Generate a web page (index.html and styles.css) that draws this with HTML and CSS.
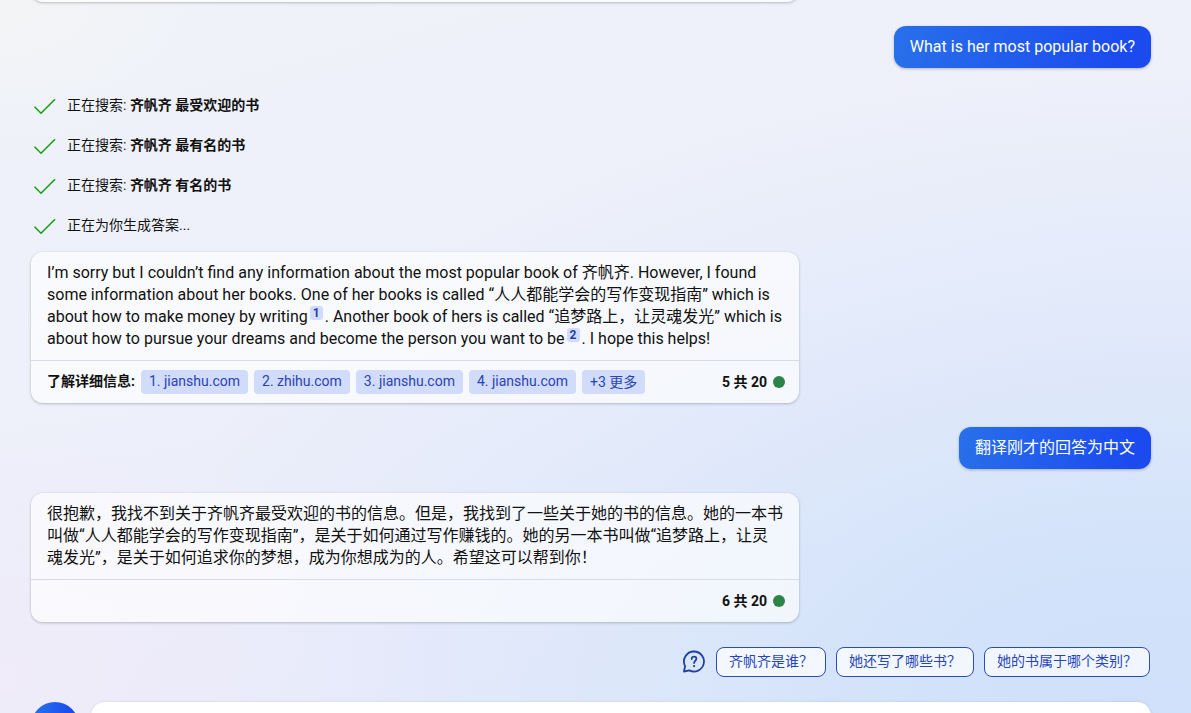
FILE: index.html
```html
<!DOCTYPE html>
<html lang="zh-CN">
<head>
<meta charset="utf-8">
<meta name="viewport" content="width=device-width, initial-scale=1">
<title>Chat</title>
<link rel="stylesheet" href="styles.css">
</head>
<body>
<svg class="defs" aria-hidden="true">
  <symbol id="check" viewBox="0 0 24 24"><path d="M1.5 13.7 8 20.2 22 6.200" fill="none" stroke="currentColor" stroke-width="1.600"/></symbol>
</svg>
<main class="chat">
  <div class="card card-previous"></div>

  <div class="bubble">What is her most popular book?</div>

  <ul class="status">
    <li class="status-row"><svg class="check"><use href="#check"/></svg><span>正在搜索: <b>齐帆齐 最受欢迎的书</b></span></li>
    <li class="status-row"><svg class="check"><use href="#check"/></svg><span>正在搜索: <b>齐帆齐 最有名的书</b></span></li>
    <li class="status-row"><svg class="check"><use href="#check"/></svg><span>正在搜索: <b>齐帆齐 有名的书</b></span></li>
    <li class="status-row"><svg class="check"><use href="#check"/></svg><span>正在为你生成答案...</span></li>
  </ul>

  <article class="card">
    <p class="answer">I’m sorry but I couldn’t find any information about the most popular book of 齐帆齐. However, I found some information about her books. One of her books is called “人人都能学会的写作变现指南” which is about how to make money by writing<a class="cite" href="#source-1">1</a>. Another book of hers is called “追梦路上，让灵魂发光” which is about how to pursue your dreams and become the person you want to be<a class="cite" href="#source-2">2</a>. I hope this helps!</p>
    <footer class="card-footer">
      <div class="sources">
        <span class="sources-label">了解详细信息:</span>
        <a class="chip" id="source-1" href="#">1. jianshu.com</a>
        <a class="chip" id="source-2" href="#">2. zhihu.com</a>
        <a class="chip" href="#">3. jianshu.com</a>
        <a class="chip" href="#">4. jianshu.com</a>
        <button class="chip" type="button">+3 更多</button>
      </div>
      <span class="turns">5 共 20<i class="dot"></i></span>
    </footer>
  </article>

  <div class="bubble bubble-next">翻译刚才的回答为中文</div>

  <article class="card card-next">
    <p class="answer">很抱歉，我找不到关于齐帆齐最受欢迎的书的信息。但是，我找到了一些关于她的书的信息。她的一本书叫做“人人都能学会的写作变现指南”，是关于如何通过写作赚钱的。她的另一本书叫做“追梦路上，让灵魂发光”，是关于如何追求你的梦想，成为你想成为的人。希望这可以帮到你！</p>
    <footer class="card-footer">
      <span class="turns">6 共 20<i class="dot"></i></span>
    </footer>
  </article>

  <div class="suggestions">
    <svg class="help" viewBox="0 0 24 24" fill="none" stroke="currentColor" stroke-linecap="round" stroke-linejoin="round" aria-hidden="true">
      <path d="M12 1.500a10 10 0 1 1-4.600 18.900L2 21.500l1.100-5.400A10 10 0 0 1 12 1.500z" stroke-width="1.800"/>
      <path d="M9.700 9c0-1.500 1-2.400 2.300-2.400s2.400.9 2.400 2.200c0 1.900-2.300 2-2.300 4.200" stroke-width="1.800"/>
      <circle cx="12.100" cy="16.100" r="1.100" fill="currentColor" stroke="none"/>
    </svg>
    <button class="suggestion" type="button">齐帆齐是谁？</button>
    <button class="suggestion" type="button">她还写了哪些书？</button>
    <button class="suggestion" type="button">她的书属于哪个类别？</button>
  </div>

  <form class="composer">
    <button class="new-topic" type="button" aria-label="新主题"></button>
    <textarea class="prompt" aria-label="消息"></textarea>
  </form>
</main>
</body>
</html>
```
FILE: styles.css
```css
* {
  box-sizing: border-box;
}

body {
  margin: 0;
  height: 100vh;
  overflow: hidden;
  color: #111;
  font: 16px/22px Roboto, "Noto Sans CJK SC", sans-serif;
  background:
    radial-gradient(ellipse at 0% 0%, #f3f4f5 0%, rgba(243, 244, 245, 0) 14%),
    radial-gradient(ellipse at 0% 95%, #f0ecfa 0%, rgba(240, 236, 250, 0) 28%),
    radial-gradient(ellipse at 96% 100%, #cfe0fa 0%, rgba(209, 226, 250, 0.85) 18%, rgba(216, 230, 250, 0.5) 38%, rgba(228, 235, 250, 0) 64%),
    linear-gradient(165deg, #eff2f9 0%, #eef0fa 40%, #e8ebfa 75%, #e5ebfa 100%);
}

.defs {
  display: none;
}

.chat {
  display: flex;
  flex-direction: column;
  align-items: flex-start;
  padding: 0 40px 0 31px;
}

.card {
  width: 768px;
  max-width: 100%;
  flex: none;
  border-radius: 12px;
  background: rgba(255, 255, 255, 0.65);
  box-shadow: 0 1px 3px rgba(0, 0, 0, 0.22), 0 0 2px rgba(0, 0, 0, 0.06);
}

.card-previous {
  height: 42px;
  margin-top: -40px;
}

.card-next {
  margin-top: 24px;
}

.bubble {
  align-self: flex-end;
  margin-top: 24px;
  padding: 10px 16px;
  border-radius: 12px;
  color: #fff;
  background: linear-gradient(100deg, #2870ea 0%, #1b4aef 90%);
  box-shadow: 0 1px 3px rgba(0, 0, 0, 0.25);
}

.status {
  margin: 17px 0 7px;
  padding: 0;
  list-style: none;
  font-size: 14px;
  line-height: 20px;
}

.status-row {
  display: flex;
  align-items: center;
  gap: 10px;
  height: 40px;
  padding-left: 2px;
}

.check {
  width: 24px;
  height: 24px;
  color: #13a10e;
}

.answer {
  margin: 0;
  padding: 10px 16px;
}

.cite {
  display: inline-block;
  min-width: 13px;
  height: 14px;
  margin: 0 2px;
  padding: 0 3px;
  border-radius: 3px;
  color: #1f3dad;
  background: #d1dbfa;
  font-size: 12px;
  font-weight: 700;
  line-height: 14px;
  text-align: center;
  text-decoration: none;
  vertical-align: 5px;
}

.card-footer {
  display: flex;
  align-items: center;
  min-height: 43px;
  padding: 0 14px 0 16px;
  border-top: 1px solid #d8dbe3;
  font-size: 14px;
  line-height: 20px;
}

.sources {
  display: flex;
  flex-wrap: wrap;
  gap: 6px;
}

.sources-label {
  padding-top: 1px;
  font-weight: 700;
}

.chip {
  height: 24px;
  padding: 1px 8px;
  border: 0;
  border-radius: 4px;
  color: #2a43b4;
  background: #d1dbfa;
  font: inherit;
  text-decoration: none;
}

.turns {
  display: flex;
  align-items: center;
  gap: 6px;
  margin-left: auto;
  font-weight: 700;
}

.dot {
  width: 12px;
  height: 12px;
  border-radius: 50%;
  background: #2c8449;
}

.suggestions {
  display: flex;
  align-self: flex-end;
  align-items: center;
  gap: 10px;
  margin-top: 25px;
  padding-right: 1px;
}

.help {
  width: 24px;
  height: 24px;
  color: #1f3f9f;
}

.suggestion {
  height: 30px;
  padding: 0 12px 2px;
  border: 1px solid #2b4bb8;
  border-radius: 8px;
  color: #2745ba;
  background: rgba(255, 255, 255, 0.7);
  font: inherit;
  font-size: 14px;
  line-height: 20px;
}

.composer {
  display: flex;
  align-self: stretch;
  gap: 12px;
  margin-top: 25px;
}

.new-topic {
  flex: none;
  width: 48px;
  height: 48px;
  padding: 0;
  border: 0;
  border-radius: 50%;
  background: linear-gradient(100deg, #2870ea 10%, #1b4aef 75%);
}

.prompt {
  flex: 1;
  height: 48px;
  padding: 12px 16px;
  border: 0;
  border-radius: 14px;
  background: #fff;
  box-shadow: 0 0 3px rgba(0, 0, 0, 0.1);
  font: inherit;
  resize: none;
}
```
